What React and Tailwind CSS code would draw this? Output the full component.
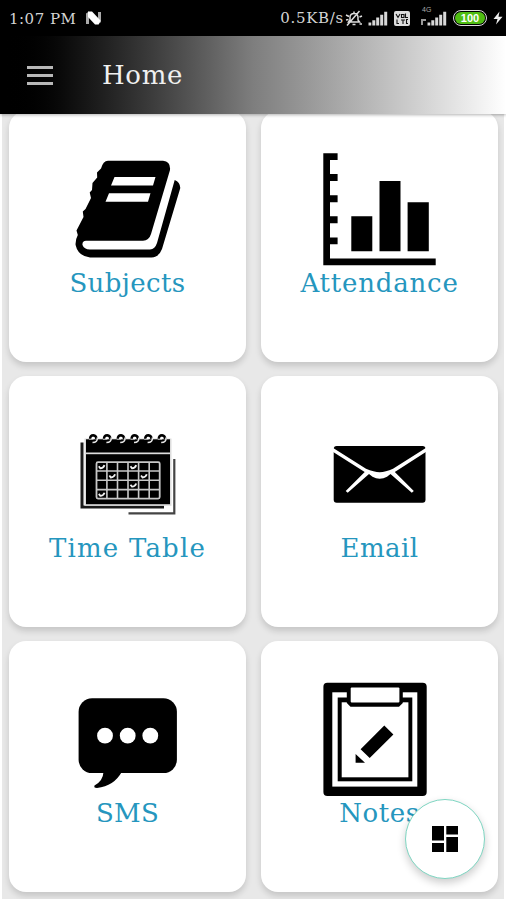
const SubjectsIcon = () => (
  <svg viewBox="58 146 140 125" className="h-[125px] w-[140px]">
    <path d="M108 160.7 L163 160.7 Q170.8 161.5 170 170 L151 234 Q149 240.5 143 240.8 L86 240.8 Q82 241 82.5 245 Q84 249.3 90 249.5 L150 249.5 Q155 249 157 243 L174.7 180 Q180 182 180.3 188 L162 249 Q159 257.3 151.5 257.5 L90 257.5 Q78 256 75.6 245 Q75.2 240 77.8 235 L76.5 230.5 L83.5 217 L82.8 211.5 L85.5 209 L91 198 L89.7 192.5 L92 190 L92.5 183 L97.2 177.5 L97 172.5 L101 168.5 Q103 161 108 160.7 Z" />
    <path d="M114.5 177 H155.5 L153 185.5 H111 Z M109 193.2 H150.5 L148 201.8 H105.5 Z" fill="#fff" />
  </svg>
);

const AttendanceIcon = () => (
  <svg viewBox="310 146 140 125" className="h-[125px] w-[140px]">
    <path d="M323.3 153.3 H337.6 V160 H330 V174 H337.6 V181 H330 V195.3 H337.6 V202.3 H330 V216.3 H337.6 V223.3 H330 V237.6 H337.6 V244.3 H330 V258.5 H435.7 V265.3 H323.3 Z" />
    <path d="M351.3 216.3 h21 v35 h-21 Z M379.5 181 h21 v70.3 h-21 Z M407.6 202.3 h21.2 v49 h-21.2 Z" />
  </svg>
);

const rings = [93.3, 107.2, 121, 134.8, 148.4, 162];
const checks = [
  [0, 0],
  [3, 0],
  [1, 1],
  [4, 1],
  [3, 2],
  [0, 3],
];

const TimeTableIcon = () => (
  <svg viewBox="58 411 140 125" className="h-[125px] w-[140px]">
    <path d="M82 442.5 V507 H164" fill="none" stroke="#1a1a1a" strokeWidth="3" />
    <path d="M174.3 459 V513.4 H128.5" fill="none" stroke="#444" strokeWidth="2.2" />
    <rect x="84.5" y="438.5" width="87" height="67.3" fill="#ddd" />
    <rect x="86" y="439.3" width="84" height="13.2" />
    <rect x="86" y="454.2" width="84" height="50" />
    {rings.map((x) => (
      <g key={x} fill="none">
        <path d={`M${x - 4.2} 436 h4.4 v3.5 h-4.4 z`} fill="#fff" />
        <path d={`M${x - 3.2} 438.8 Q${x - 3} 435.2 ${x} 435.2 Q${x + 3} 435.5 ${x + 3.2} 439`} stroke="#000" strokeWidth="2.6" />
        <path d={`M${x - 1.5} 438.7 Q${x - 0.5} 437.2 ${x + 1} 438.2`} stroke="#fff" strokeWidth="1.2" />
        <path d={`M${x + 4} 437.5 Q${x + 4.5} 442.6 ${x - 0.8} 442.6`} stroke="#e5e5e5" strokeWidth="1.5" />
      </g>
    ))}
    <rect x="96.5" y="462.2" width="63.2" height="36.4" rx="1.5" fill="none" stroke="#c8c8c8" strokeWidth="1.8" />
    <path
      d="M106.9 462 V499 M117.5 462 V499 M128 462 V499 M138.6 462 V499 M149.2 462 V499 M96 471 H160 M96 480.3 H160 M96 489.6 H160"
      stroke="#c8c8c8"
      strokeWidth="1.6"
    />
    {checks.map(([c, r]) => (
      <path
        key={`${c}-${r}`}
        d={`M${98.8 + c * 10.57} ${466.3 + r * 9.2} l1.5 2 q3 0 4.2 -3.2`}
        fill="none"
        stroke="#f2f2f2"
        strokeWidth="1.8"
      />
    ))}
  </svg>
);

const EmailIcon = () => (
  <svg viewBox="310 411 140 125" className="h-[125px] w-[140px]">
    <rect x="333.7" y="446" width="91.8" height="56.7" rx="3" />
    <path
      d="M332 447.3 L366 468.8 Q374 472.2 379.7 472.2 Q385.5 472.2 393 468.8 L427 447.3 L427 451.3 L394.8 472 L413.8 491 L411.8 492.8 L390.5 474 L387 476.8 Q383.5 478.7 379.7 478.7 Q376 478.7 372.5 476.8 L369 474 L347.7 492.8 L345.7 491 L364.7 472 L332 451.3 Z"
      fill="#fff"
    />
  </svg>
);

const SmsIcon = () => (
  <svg viewBox="58 676 140 125" className="h-[125px] w-[140px]">
    <rect x="78.6" y="698.3" width="98.3" height="74.8" rx="13.5" />
    <path d="M103.5 772 Q103 781 94.5 785.5 Q93.5 788 97 788 Q114 786 121.7 772 Z" />
    <circle cx="105" cy="735.7" r="7.9" fill="#fff" />
    <circle cx="127.7" cy="735.7" r="7.9" fill="#fff" />
    <circle cx="150.3" cy="735.7" r="7.9" fill="#fff" />
  </svg>
);

const NotesIcon = () => (
  <svg viewBox="310 676 140 125" className="h-[125px] w-[140px]">
    <rect x="323.4" y="682.8" width="103.3" height="113.2" rx="4" />
    <rect x="332.3" y="692.3" width="85" height="94.3" fill="#fff" />
    <rect x="337.7" y="697.5" width="74.6" height="83.8" />
    <rect x="341.7" y="702.3" width="66.7" height="75" fill="#fff" />
    <path d="M346.8 684 H402.8 V703 L399 706.7 H350.5 L346.8 703 Z" />
    <rect x="350.7" y="687.5" width="48.7" height="15" rx="1" fill="#fff" />
    <path d="M384.3 725.6 L393.4 734.4 L369.7 758 L360.6 749.3 Z M355.6 754 L365 762.8 H355.6 Z" />
  </svg>
);

const SignalIcon = () => (
  <svg viewBox="0 0 20 15" className="h-[15px] w-5">
    <path d="M0.5 11.5 h2.8 v3 h-2.8z M4.3 9.3 h3 v5.2 h-3z M8.2 6.5 h3 v8 h-3z M12.2 3.7 h3 v10.8 h-3z M16.2 0.8 h3 v13.7 h-3z" fill="#d8d8d8" />
  </svg>
);

const StatusBar = () => (
  <div className="flex h-9 items-center justify-between bg-black pl-[9px] pr-[3px] text-[15px] text-[#d4d4d4]">
    <div className="flex items-center">
      <span className="w-[76px] whitespace-nowrap pt-0.5 tracking-[0.5px]">1:07 PM</span>
      <svg viewBox="0 0 17 14" className="h-3.5 w-[17px]">
        <path d="M1 2.5 L4 0.5 V13 H1 Z M13 1 H16 V11 L13 13.5 Z" fill="#aaa" />
        <path d="M3 0.5 H7 L15.5 9.5 L13.5 13.5 H10 L3 6 Z" fill="#fff" />
      </svg>
    </div>
    <div className="flex items-center">
      <span className="whitespace-nowrap pt-px tracking-[0.7px]">0.5KB/s</span>
      <svg viewBox="0 0 18 17" className="ml-px h-[17px] w-[18px]" fill="none" stroke="#ddd" strokeWidth="1.5">
        <path d="M3.5 12 L5 10 V7 Q5.5 3.5 9 3.5 Q12.5 3.5 13 7 V10 L14.5 12 Z M7.5 14.5 H10.5 M9 1.5 V3 M2 15.5 L14.5 1 M1 5 L4 6.5 M1 10 L3.5 9.5 M17 6 L14.5 7 M17 14 H14.5" />
      </svg>
      <div className="ml-[5px]">
        <SignalIcon />
      </div>
      <svg viewBox="0 0 16 15" className="ml-1.5 h-[15px] w-4">
        <rect width="16" height="15" rx="2" fill="#ddd" />
        <path d="M2 3 L4 6.5 L6 3 M7.5 3.5 h2.5 v3 h-2.5z M11.5 2.5 v4 h2.5 M3 8.5 v4 h2 M7 9 h4 M9 9 v4 M14 8.5 h-1.5 v4 h1.5" fill="none" stroke="#111" strokeWidth="1.1" />
      </svg>
      <div className="relative ml-2 flex w-[29px] justify-end">
        <span className="absolute left-1 top-[-5px] font-['Liberation_Sans'] text-[7px] leading-[8px] text-[#aaa]">4G</span>
        <svg viewBox="0 0 7 8" className="mt-[7px] h-2 w-[7px]">
          <path d="M1 1 h5 v2 h-3 v4 h-2z" fill="#999" />
        </svg>
        <SignalIcon />
      </div>
      <div className="ml-[6px] flex h-4 w-[34px] items-center justify-center rounded-full border border-[#ddd] bg-black p-px">
        <div className="flex h-full w-full items-center justify-center rounded-full bg-[#4fbd12] font-['Liberation_Sans'] text-[11px] font-bold leading-none text-white">
          100
        </div>
      </div>
      <svg viewBox="0 0 10 14" className="ml-[6px] h-3.5 w-2.5">
        <path d="M6.5 0.5 L0.5 8 H4.5 L3 13.5 L9.5 5.8 H5.5 Z" fill="#eee" />
      </svg>
    </div>
  </div>
);

const AppBar = () => (
  <header className="relative z-10 flex h-[78px] items-center bg-linear-to-r from-black via-[#7e7e7e] to-white pl-[27px] shadow-[0_1px_3px_rgba(0,0,0,0.3)]">
    <button className="flex w-[26px] flex-col gap-[5px]">
      <span className="h-[3px] w-full bg-[#b8b8b8]" />
      <span className="h-[3px] w-full bg-[#b8b8b8]" />
      <span className="h-[3px] w-full bg-[#b8b8b8]" />
    </button>
    <h1 className="ml-[49px] text-[26px] leading-none tracking-[0.7px] text-[#f0f0f0]">Home</h1>
  </header>
);

const items = [
  {label: 'Subjects', icon: SubjectsIcon, tracking: 'tracking-[0.4px]'},
  {label: 'Attendance', icon: AttendanceIcon, tracking: 'tracking-[0.8px]'},
  {label: 'Time Table', icon: TimeTableIcon, tracking: 'tracking-[1.2px]'},
  {label: 'Email', icon: EmailIcon, tracking: 'tracking-[0.4px]'},
  {label: 'SMS', icon: SmsIcon, tracking: 'tracking-[0.2px]'},
  {label: 'Notes', icon: NotesIcon, tracking: 'tracking-[0.6px]'},
];

const MenuCard = ({label, icon: Icon, tracking}) => (
  <div className="flex h-[251px] flex-col items-center rounded-[17px] bg-white pt-[35px] shadow-[0_4px_6px_rgba(0,0,0,0.15)]">
    <Icon />
    <div className={`-mt-px text-[26px] leading-[26px] text-[#2596be] ${tracking}`}>{label}</div>
  </div>
);

const App = () => {
  return (
    <div className="relative h-[900px] w-[506px] overflow-hidden bg-white font-['DejaVu_Serif',serif]">
      <StatusBar />
      <AppBar />

      <main className="mx-0.5 -mt-[3px] grid h-[788px] grid-cols-2 content-start gap-x-[15px] gap-y-[14px] overflow-hidden bg-[#e8e8e8] pl-[7px] pr-[6px]">
        {items.map((item) => (
          <MenuCard key={item.label} {...item} />
        ))}
      </main>

      <button className="absolute bottom-[21px] right-[21px] z-20 flex h-20 w-20 items-center justify-center rounded-full border border-[#7fd6c2] bg-white shadow-[0_4px_8px_rgba(0,0,0,0.2)]">
        <svg viewBox="0 0 26 26" className="h-[26px] w-[26px]">
          <path d="M0 0 h12 v14.5 h-12z M0 17 h12 v9 h-12z M14.3 0 h11.7 v8.5 h-11.7z M14.3 11 h11.7 v15 h-11.7z" />
        </svg>
      </button>
    </div>
  );
};

export default App;
